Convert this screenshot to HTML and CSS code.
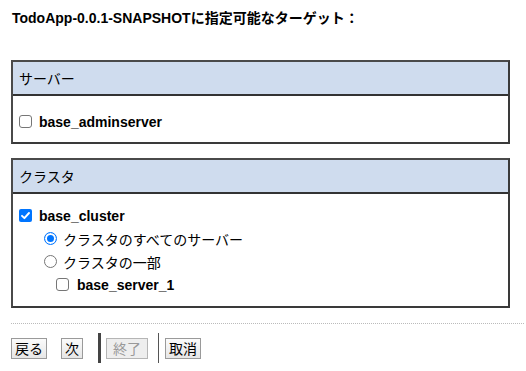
FILE: index.html
```html
<!DOCTYPE html>
<html lang="ja">
<head>
<meta charset="utf-8">
<link rel="stylesheet" href="styles.css">
</head>
<body>
<div class="page">
  <h1 class="title">TodoApp-0.0.1-SNAPSHOTに指定可能なターゲット：</h1>

  <section class="box box-server">
    <div class="box-head">サーバー</div>
    <div class="box-body">
      <label class="row"><span class="cb"></span><span class="name">base_adminserver</span></label>
    </div>
  </section>

  <section class="box box-cluster">
    <div class="box-head">クラスタ</div>
    <div class="box-body">
      <label class="row"><span class="cb checked"><svg viewBox="0 0 13 13" width="13" height="13"><path d="M3 6.8 L5.4 9.2 L10 4" fill="none" stroke="#fff" stroke-width="1.9" stroke-linecap="round" stroke-linejoin="round"/></svg></span><span class="name">base_cluster</span></label>
      <label class="row sub"><span class="rb on"></span><span class="jp">クラスタのすべてのサーバー</span></label>
      <label class="row sub"><span class="rb"></span><span class="jp">クラスタの一部</span></label>
      <label class="row subsub"><span class="cb"></span><span class="name">base_server_1</span></label>
    </div>
  </section>

  <div class="rule"></div>

  <div class="actions">
    <button class="btn">戻る</button>
    <button class="btn next">次</button>
    <span class="sep thick"></span>
    <button class="btn disabled">終了</button>
    <span class="sep thin"></span>
    <button class="btn">取消</button>
  </div>
</div>
</body>
</html>
```

FILE: styles.css
```css
html, body {
  margin: 0;
  padding: 0;
  background: #fff;
}
body {
  font-family: "Liberation Sans", "Noto Sans CJK JP", sans-serif;
  color: #000;
}
.page {
  padding: 8px 16px 0 11px;
}
.title {
  margin: 0 0 0 1px;
  font-size: 14px;
  font-weight: bold;
  line-height: 20px;
  height: 20px;
}
.box {
  border: 2px solid #3a3a3a;
  border-top-color: #4a4a4a;
  border-left-color: #4a4a4a;
}
.box-server {
  margin-top: 32px;
}
.box-cluster {
  margin-top: 14px;
}
.box-head {
  background: #cfdcee;
  height: 32px;
  line-height: 32px;
  padding-left: 6px;
  font-family: "Noto Sans CJK JP", sans-serif;
  font-size: 14px;
  border-bottom: 2px solid #333;
}
.box-body {
  padding: 14px 6px 9px 6px;
}
.box-cluster .box-body {
  padding-top: 10px;
  padding-bottom: 10px;
}
.row {
  display: flex;
  align-items: center;
  height: 23px;
  gap: 7px;
}
.row.sub {
  padding-left: 25px;
  gap: 6px;
}
.row.subsub {
  padding-left: 37px;
  gap: 8px;
}
.name {
  font-weight: bold;
  font-size: 14px;
}
.jp {
  font-family: "Noto Sans CJK JP", sans-serif;
  font-size: 14px;
}
.cb {
  width: 11px;
  height: 11px;
  border: 1px solid #767676;
  border-radius: 3px;
  background: #fff;
  flex: none;
  display: flex;
  align-items: center;
  justify-content: center;
}
.cb.checked {
  width: 13px;
  height: 13px;
  border: none;
  background: #0075ff;
  border-radius: 2px;
}
.rb {
  width: 11px;
  height: 11px;
  border: 1px solid #767676;
  border-radius: 50%;
  background: #fff;
  flex: none;
}
.rb.on {
  border-color: #0075ff;
  box-shadow: inset 0 0 0 2px #fff, inset 0 0 0 6px #0075ff;
}
.rule {
  margin-top: 15px;
  margin-right: -14px;
  border-top: 1px dotted #bbb;
}
.actions {
  display: flex;
  align-items: center;
  margin-top: 9px;
}
.btn {
  font-family: "Noto Sans CJK JP", sans-serif;
  font-size: 14px;
  line-height: 17px;
  padding: 1px 3px;
  border: 1px solid #9a9a9a;
  background: linear-gradient(#fbfbfb, #e6e6e6);
  color: #000;
  border-radius: 0;
  margin-right: 14px;
  height: 21px;
}
.btn.next {
  margin-right: 14px;
}
.btn.disabled {
  color: #999;
  background: #eeeeee;
  border-color: #b5b5b5;
  padding: 1px 6px;
  margin-right: 0;
}
.sep {
  display: block;
  height: 30px;
  background: #444;
}
.sep.thick {
  width: 3px;
  margin: 0 5px 0 1px;
}
.sep.thin {
  width: 1px;
  margin: 0 6px 0 10px;
  background: #555;
}
```
